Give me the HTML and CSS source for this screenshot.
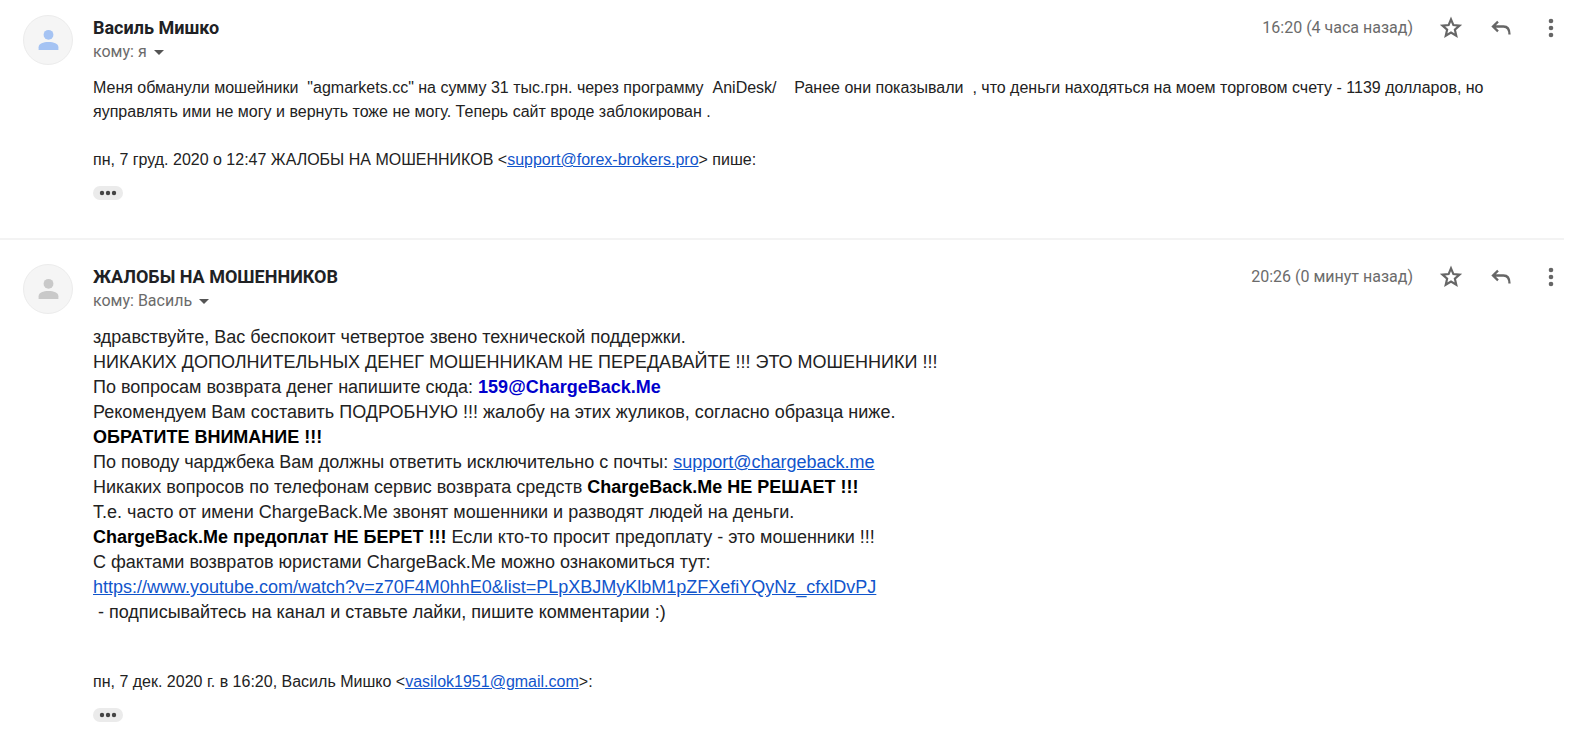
FILE: index.html
```html
<!DOCTYPE html>
<html lang="ru">
<head>
<meta charset="utf-8">
<title>Переписка</title>
<link rel="stylesheet" href="styles.css">
</head>
<body>
<svg class="sprite" aria-hidden="true">
  <symbol id="person" viewBox="0 0 24 24"><circle cx="12" cy="6.500" r="4.700"/><path d="M2.500 21v-2.500c0-3.500 4.500-5 9.500-5s9.500 1.500 9.500 5V21z"/></symbol>
  <symbol id="star" viewBox="1 1 22 22"><path d="M12 4.100l2.200 5.200 5.600.5-4.250 3.700 1.270 5.500L12 16.100 7.180 19l1.270-5.500L4.200 9.800l5.600-.5z" fill="none" stroke="currentColor" stroke-width="2"/></symbol>
  <symbol id="reply" viewBox="0 0 24 24"><path d="M9 5.700 4 10.500l5 4.800M4 10.500h10.500c4.200 0 6 2.300 6 8" fill="none" stroke="currentColor" stroke-width="2.300"/></symbol>
  <symbol id="more" viewBox="0 0 24 24"><circle cx="12" cy="5" r="2.300"/><circle cx="12" cy="12" r="2.300"/><circle cx="12" cy="19" r="2.300"/></symbol>
  <symbol id="dots" viewBox="0 0 20 6"><circle cx="4" cy="3" r="2.200"/><circle cx="10" cy="3" r="2.200"/><circle cx="16" cy="3" r="2.200"/></symbol>
</svg>
<main>
  <article class="message">
    <div class="avatar avatar-blue"><svg><use href="#person"/></svg></div>
    <div class="content">
      <header class="head">
        <div class="who">
          <h2>Василь Мишко</h2>
          <button class="recipient" type="button">кому: я <span class="caret"></span></button>
        </div>
        <div class="tools">
          <time>16:20 (4 часа назад)</time>
          <button type="button" aria-label="Пометить"><svg><use href="#star"/></svg></button>
          <button type="button" aria-label="Ответить"><svg><use href="#reply"/></svg></button>
          <button type="button" aria-label="Ещё"><svg><use href="#more"/></svg></button>
        </div>
      </header>
      <div class="text">
        <p>Меня обманули мошейники &nbsp;"agmarkets.cc" на сумму 31 тыс.грн. через программу &nbsp;AniDesk/ &nbsp; &nbsp;Ранее они показывали &nbsp;, что деньги находяться на моем торговом счету - 1139 долларов, но яуправлять ими не могу и вернуть тоже не могу. Теперь сайт вроде заблокирован .</p>
        <p class="quote">пн, 7 груд. 2020 о 12:47 ЖАЛОБЫ НА МОШЕННИКОВ &lt;<a href="mailto:support@forex-brokers.pro">support@forex-brokers.pro</a>&gt; пише:</p>
      </div>
      <button class="trim" type="button" aria-label="Показать цитату"><svg><use href="#dots"/></svg></button>
    </div>
  </article>
  <hr class="divider">
  <article class="message">
    <div class="avatar"><svg><use href="#person"/></svg></div>
    <div class="content">
      <header class="head">
        <div class="who">
          <h2>ЖАЛОБЫ НА МОШЕННИКОВ</h2>
          <button class="recipient" type="button">кому: Василь <span class="caret"></span></button>
        </div>
        <div class="tools">
          <time>20:26 (0 минут назад)</time>
          <button type="button" aria-label="Пометить"><svg><use href="#star"/></svg></button>
          <button type="button" aria-label="Ответить"><svg><use href="#reply"/></svg></button>
          <button type="button" aria-label="Ещё"><svg><use href="#more"/></svg></button>
        </div>
      </header>
      <div class="text large">
        <p>здравствуйте, Вас беспокоит четвертое звено технической поддержки.</p>
        <p>НИКАКИХ ДОПОЛНИТЕЛЬНЫХ ДЕНЕГ МОШЕННИКАМ НЕ ПЕРЕДАВАЙТЕ !!! ЭТО МОШЕННИКИ !!!</p>
        <p>По вопросам возврата денег напишите сюда: <b class="address">159@ChargeBack.Me</b></p>
        <p>Рекомендуем Вам составить ПОДРОБНУЮ !!! жалобу на этих жуликов, согласно образца ниже.</p>
        <p><b>ОБРАТИТЕ ВНИМАНИЕ !!!</b></p>
        <p>По поводу чарджбека Вам должны ответить исключительно с почты: <a href="mailto:support@chargeback.me">support@chargeback.me</a></p>
        <p>Никаких вопросов по телефонам сервис возврата средств <b>ChargeBack.Me НЕ РЕШАЕТ !!!</b></p>
        <p>Т.е. часто от имени ChargeBack.Me звонят мошенники и разводят людей на деньги.</p>
        <p><b>ChargeBack.Me предоплат НЕ БЕРЕТ !!!</b> Если кто-то просит предоплату - это мошенники !!!</p>
        <p>С фактами возвратов юристами ChargeBack.Me можно ознакомиться тут:</p>
        <p><a href="https://www.youtube.com/watch?v=z70F4M0hhE0&amp;list=PLpXBJMyKlbM1pZFXefiYQyNz_cfxlDvPJ">https://www.youtube.com/watch?v=z70F4M0hhE0&amp;list=PLpXBJMyKlbM1pZFXefiYQyNz_cfxlDvPJ</a></p>
        <p>&nbsp;- подписывайтесь на канал и ставьте лайки, пишите комментарии :)</p>
      </div>
      <div class="text">
        <p class="quote-late">пн, 7 дек. 2020 г. в 16:20, Василь Мишко &lt;<a href="mailto:vasilok1951@gmail.com">vasilok1951@gmail.com</a>&gt;:</p>
      </div>
      <button class="trim" type="button" aria-label="Показать цитату"><svg><use href="#dots"/></svg></button>
    </div>
  </article>
</main>
</body>
</html>
```
FILE: styles.css
```css
* { box-sizing: border-box; }
body { margin: 0; background: #fff; color: #222; font-family: "Liberation Sans", Arial, sans-serif; }
.sprite { display: none; }
button { border: 0; padding: 0; background: none; font: inherit; color: inherit; cursor: pointer; }
h2, p { margin: 0; }
svg { display: block; fill: currentColor; }
.message { display: flex; gap: 20px; padding: 15px 17px 0 23px; }
.divider { height: 2px; margin: 38px 16px 9px 0; border: 0; background: #f3f3f3; }
.avatar { display: flex; flex: none; align-items: center; justify-content: center; width: 50px; height: 50px; border: 1px solid #ececec; border-radius: 50%; background: #f5f5f5; color: #c9c9c9; }
.avatar svg { width: 25px; height: 25px; }
.avatar-blue { color: #a5c3f3; }
.content { flex: 1; min-width: 0; }
.head { display: flex; justify-content: space-between; align-items: flex-start; font-family: Roboto, sans-serif; }
h2 { font-size: 18px; line-height: 26px; font-weight: 700; color: #202124; }
.recipient { display: flex; align-items: center; gap: 7px; font-size: 16px; line-height: 22px; color: #6b6b6b; }
.caret { border: 5px solid transparent; border-top-color: #555; border-bottom: 0; }
.tools { display: flex; align-items: center; gap: 26px; height: 25px; color: #666; }
time { font-size: 16px; color: #6b6b6b; }
.tools svg { width: 24px; height: 24px; }
.text { margin-top: 13px; font-size: 16px; line-height: 24px; }
.large { font-size: 18px; line-height: 25px; }
.large b { color: #000; }
a { color: #15c; }
.large .address { color: #00c; }
.quote { margin-top: 24px; }
.quote-late { margin-top: 45px; }
.trim { display: flex; align-items: center; justify-content: center; width: 30px; height: 14px; margin-top: 14px; border-radius: 7px; background: #ebebeb; color: #444; }
.trim svg { width: 20px; height: 6px; }
```
